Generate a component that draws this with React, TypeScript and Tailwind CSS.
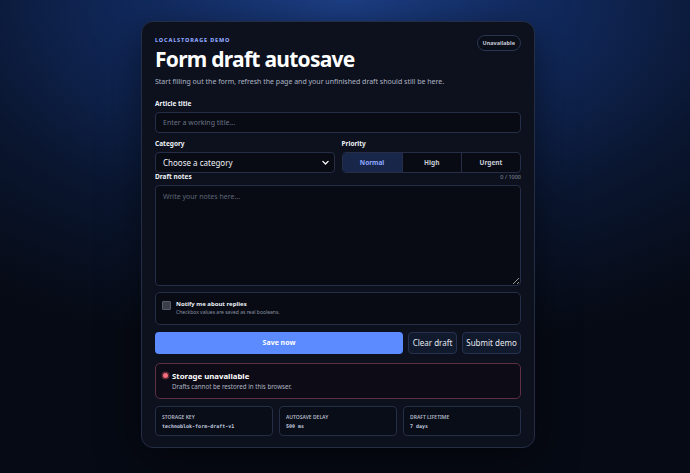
import { useState } from "react";

const PRIORITIES = ["Normal", "High", "Urgent"] as const;

const STATS = [
  { label: "Storage key", value: "technoblok-form-draft-v1" },
  { label: "Autosave delay", value: "500 ms" },
  { label: "Draft lifetime", value: "7 days" },
];

function Label({ children }: { children: React.ReactNode }) {
  return (
    <label className="block text-[6.5px] font-bold leading-[8px] text-[#eef1f7]">
      {children}
    </label>
  );
}

export default function App() {
  const [priority, setPriority] = useState<string>("Normal");
  const [notes, setNotes] = useState("");

  return (
    <div
      className="flex h-[473px] w-full justify-center overflow-hidden bg-[radial-gradient(ellipse_90%_75%_at_50%_0%,#1d3f86_0%,#10285a_35%,#0a1630_65%,#060a14_100%)] pr-[14px] pt-[21px]"
      style={{ fontFamily: '"Noto Sans", "Open Sans", sans-serif' }}
    >
      <div className="h-[427px] w-[394px] rounded-[12px] border border-[#242d44] bg-[#0c111d] px-[13px] pt-[15px] shadow-[0_10px_40px_rgba(0,0,0,0.5)]">
        {/* header */}
        <div className="flex items-start justify-between">
          <div>
            <p className="text-[5.5px] font-extrabold uppercase leading-[7px] tracking-[0.15em] text-[#8ea6ff]">
              localStorage demo
            </p>
            <h1 className="mt-[2px] text-[21px] font-bold leading-[26px] tracking-[-0.035em] text-white">
              Form draft autosave
            </h1>
          </div>
          <span className="mt-[-2px] rounded-full border border-[#2b3451] bg-[#0a0e19] px-[5px] py-[4px] text-[5.5px] font-bold leading-[6px] text-[#c6cbd7]">
            Unavailable
          </span>
        </div>
        <p className="mt-[5px] text-[7px] leading-[9px] text-[#aeb5c4]">
          Start filling out the form, refresh the page and your unfinished draft should still be here.
        </p>

        {/* article title */}
        <div className="mt-[14px]">
          <Label>Article title</Label>
          <input
            placeholder="Enter a working title..."
            className="mt-[4px] block h-[21px] w-full rounded-[4px] border border-[#252e46] bg-[#080b14] px-[7px] text-[7px] text-white outline-none placeholder:text-[#6c7385]"
          />
        </div>

        {/* category + priority */}
        <div className="mt-[7px] grid grid-cols-2 gap-[7px]">
          <div>
            <Label>Category</Label>
            <div className="relative mt-[4px]">
              <select className="block h-[21px] w-full appearance-none rounded-[4px] border border-[#252e46] bg-[#080b14] px-[7px] text-[8px] text-[#eef1f7] outline-none">
                <option>Choose a category</option>
                <option>News</option>
                <option>Tutorial</option>
              </select>
              <svg
                viewBox="0 0 24 24"
                className="pointer-events-none absolute right-[5px] top-[6px] h-[9px] w-[9px] text-white"
                fill="none"
                stroke="currentColor"
                strokeWidth={3.5}
                strokeLinecap="round"
                strokeLinejoin="round"
              >
                <path d="M5 9l7 7 7-7" />
              </svg>
            </div>
          </div>
          <div>
            <Label>Priority</Label>
            <div className="mt-[4px] grid h-[21px] grid-cols-3 overflow-hidden rounded-[4px] border border-[#252e46] bg-[#080b14]">
              {PRIORITIES.map((p, i) => (
                <button
                  key={p}
                  onClick={() => setPriority(p)}
                  className={`text-[6.5px] font-bold ${i > 0 ? "border-l border-[#252e46]" : ""} ${
                    priority === p
                      ? "bg-[#172649] text-[#90a9ff]"
                      : "text-[#c9cdd8]"
                  }`}
                >
                  {p}
                </button>
              ))}
            </div>
          </div>
        </div>

        {/* notes */}
        <div>
          <div className="flex items-end justify-between">
            <Label>Draft notes</Label>
            <span className="text-[5.5px] leading-[7px] text-[#8a91a2]">
              {notes.length} / 1000
            </span>
          </div>
          <textarea
            value={notes}
            onChange={(e) => setNotes(e.target.value)}
            maxLength={1000}
            placeholder="Write your notes here..."
            className="mt-[4px] block h-[101px] w-full rounded-[4px] border border-[#252e46] bg-[#080b14] px-[7px] py-[6px] text-[7px] text-white outline-none placeholder:text-[#5f6678]"
          />
        </div>

        {/* notify checkbox */}
        <label className="mt-[6px] flex h-[33px] items-start gap-[5px] rounded-[5px] border border-[#252e46] bg-[#080b14] px-[6px] pt-[7px]">
          <input
            type="checkbox"
            className="mt-[1px] h-[9px] w-[9px] shrink-0 appearance-none rounded-[1px] border border-[#555b68] bg-[#3a3e48]"
          />
          <span>
            <span className="block text-[6px] font-bold leading-[9px] text-[#eef1f7]">
              Notify me about replies
            </span>
            <span className="block text-[5px] leading-[7px] text-[#8a91a2]">
              Checkbox values are saved as real booleans.
            </span>
          </span>
        </label>

        {/* actions */}
        <div className="mt-[7px] flex h-[22px] gap-[5px]">
          <button className="flex-1 rounded-[4px] bg-[#5b8bff] text-[7px] font-bold text-white">
            Save now
          </button>
          <button className="w-[49px] rounded-[4px] border border-[#263150] bg-[#111a2c] text-[8px] text-[#e4e8f0]">
            Clear draft
          </button>
          <button className="w-[59px] rounded-[4px] border border-[#263150] bg-[#111a2c] text-[8px] text-[#e4e8f0]">
            Submit demo
          </button>
        </div>

        {/* storage alert */}
        <div className="mt-[9px] flex h-[36px] gap-[4px] rounded-[5px] border border-[#5e3044] bg-[#0d0b15] px-[7px] pt-[7px]">
          <span className="mt-[2px] h-[5px] w-[5px] shrink-0 rounded-full bg-[#f56d7d] shadow-[0_0_0_1.5px_rgba(245,109,125,0.3)]" />
          <div>
            <p className="text-[7.8px] font-bold leading-[10px] text-white">
              Storage unavailable
            </p>
            <p className="mt-[2px] text-[6.2px] leading-[8px] text-[#aeb5c4]">
              Drafts cannot be restored in this browser.
            </p>
          </div>
        </div>

        {/* settings */}
        <div className="mt-[7px] grid grid-cols-3 gap-[6px]">
          {STATS.map((s) => (
            <div
              key={s.label}
              className="h-[30px] rounded-[4px] border border-[#252e46] bg-[#090d17] px-[6px] pt-[7px]"
            >
              <p className="text-[5px] font-semibold uppercase leading-[6px] text-[#b3b9c7]">
                {s.label}
              </p>
              <p
                className="mt-[3px] text-[5px] font-bold leading-[7px] text-[#c5cde0]"
                style={{ fontFamily: '"DejaVu Sans Mono", "Liberation Mono", monospace' }}
              >
                {s.value}
              </p>
            </div>
          ))}
        </div>
      </div>
    </div>
  );
}
